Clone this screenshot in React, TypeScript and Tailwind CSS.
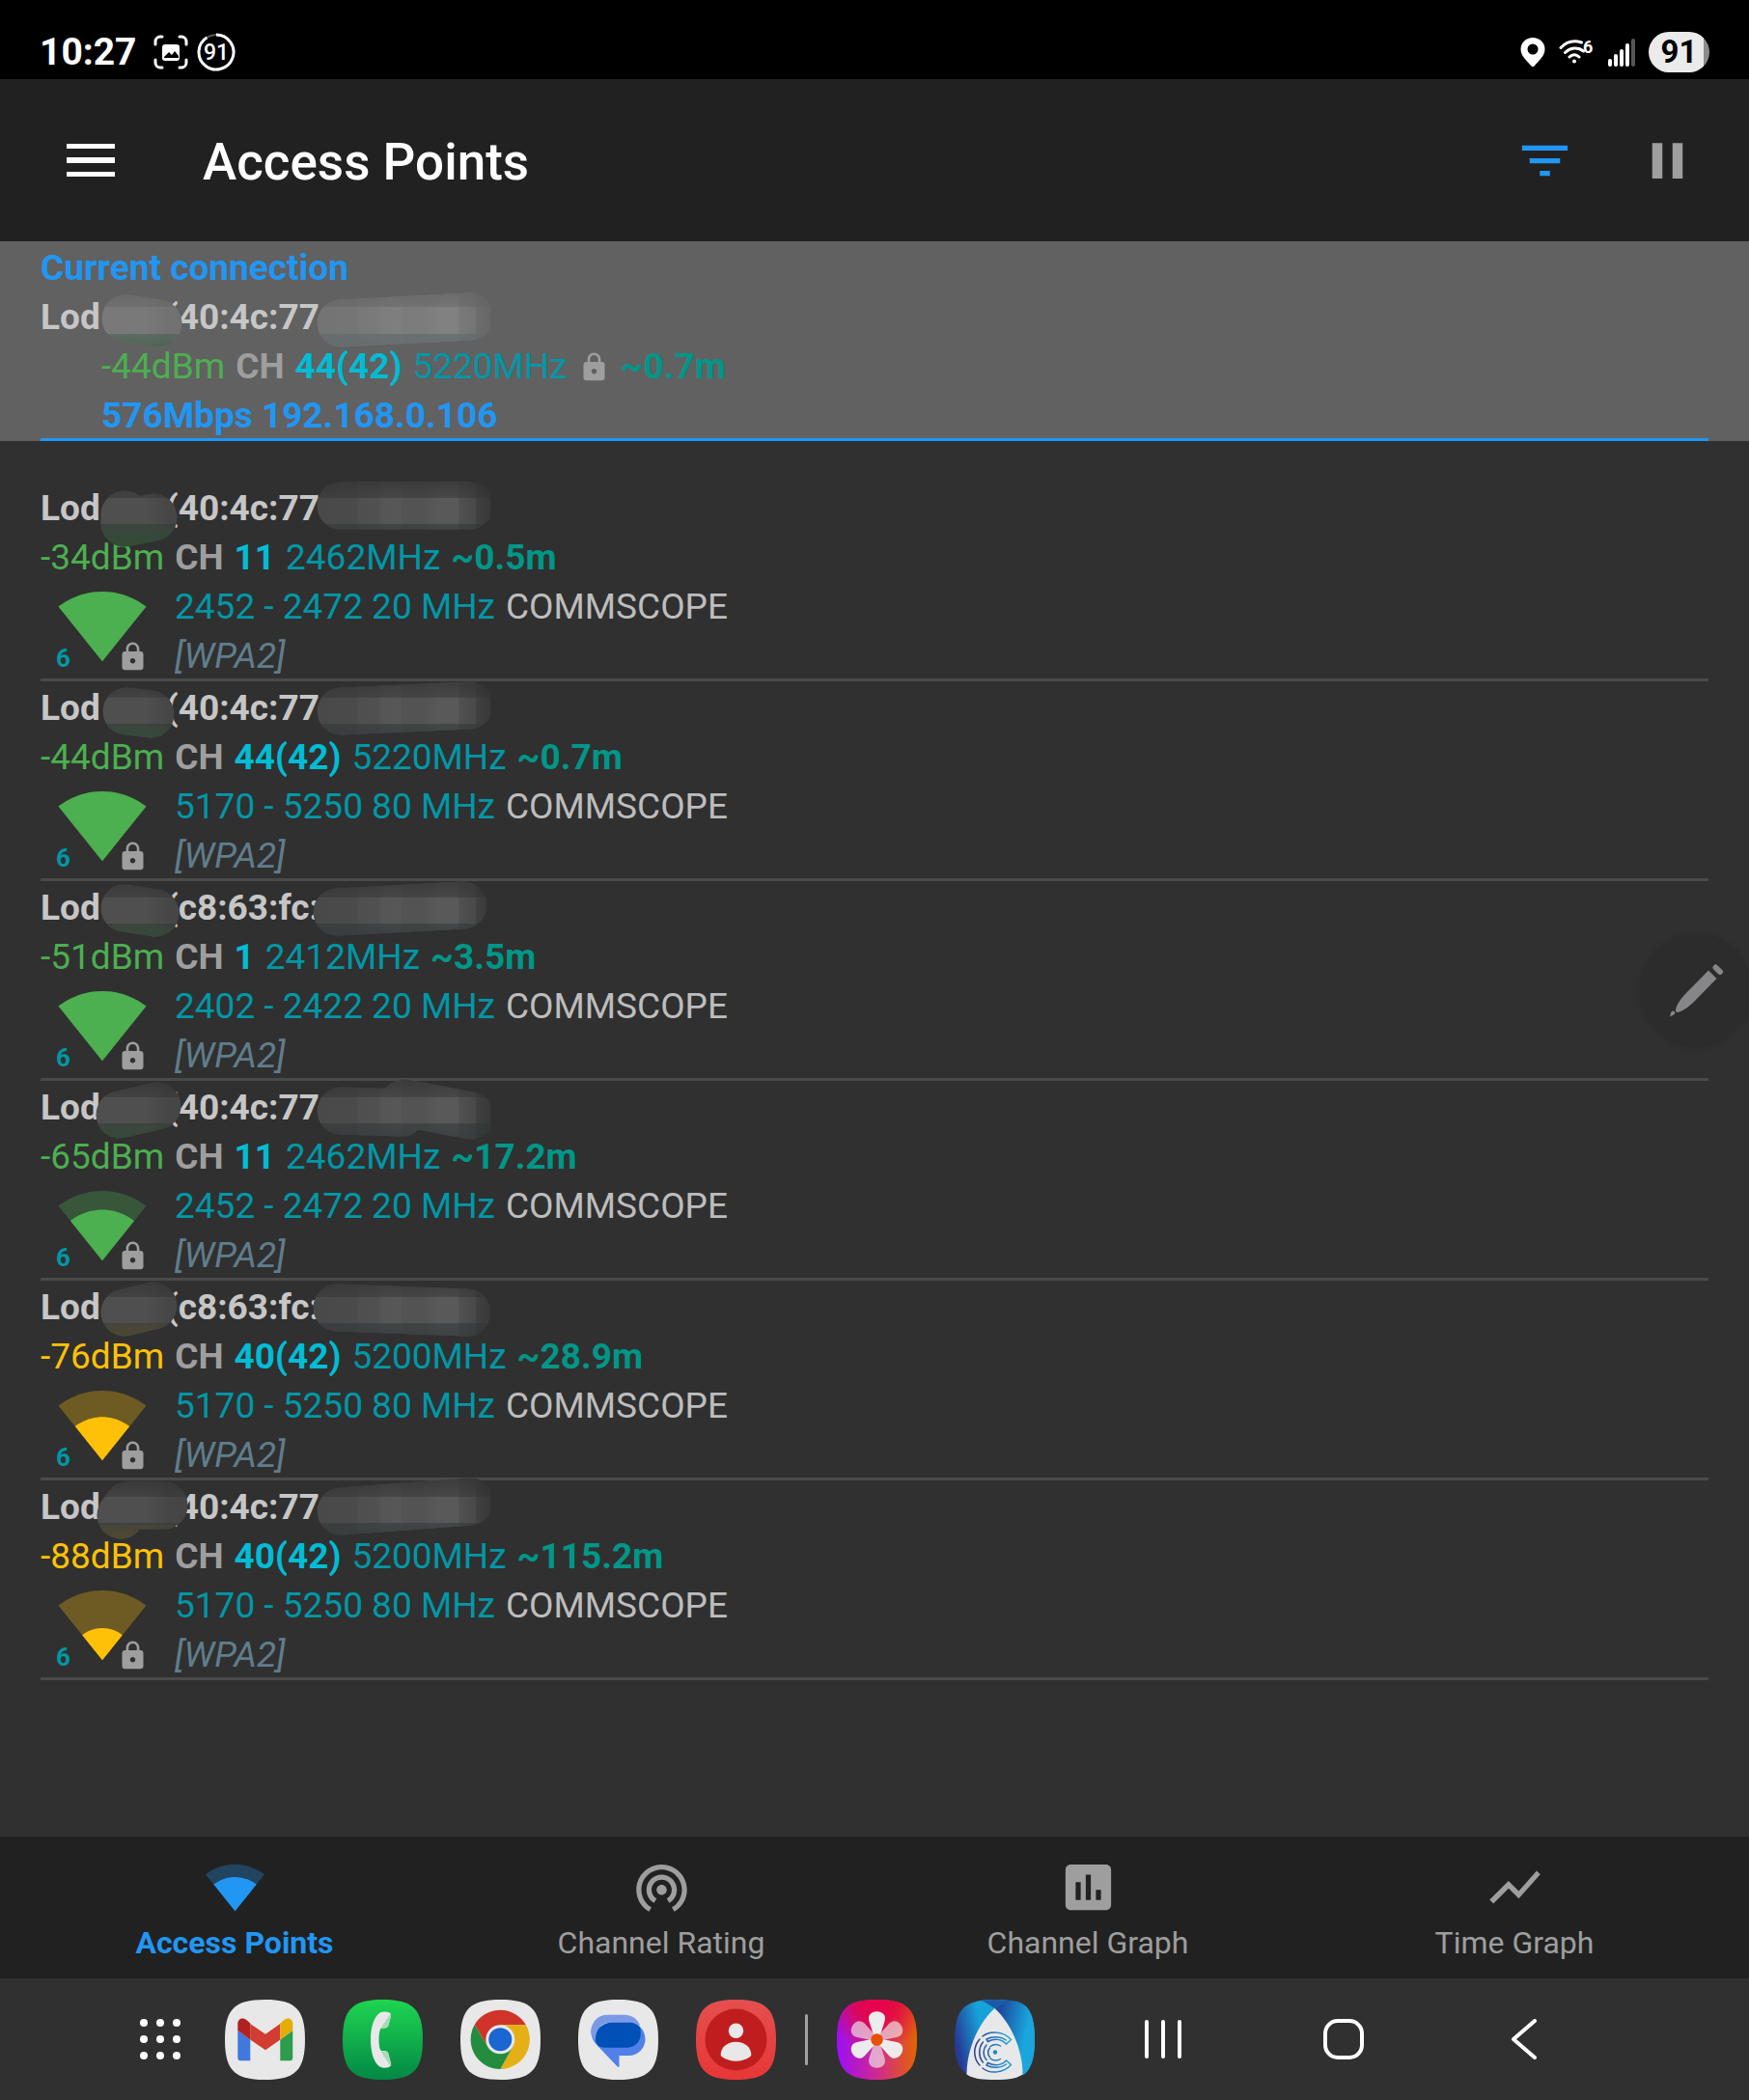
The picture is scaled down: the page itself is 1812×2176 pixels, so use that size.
import React from 'react';

type Level = 1 | 2 | 3 | 4;

interface AccessPoint {
    mac: string;
    signal: string;
    strong: boolean;
    level: Level;
    channel: string;
    frequency: string;
    distance: string;
    range: string;
    vendor: string;
    security: string;
    // strokes of the two marker swipes that hide the network name and the rest of the address
    nameSwipe: string;
    macSwipe: string;
}

const ACCESS_POINTS: AccessPoint[] = [
    {
        mac: '(40:4c:77', signal: '-34dBm', strong: true, level: 4, channel: '11', frequency: '2462MHz', distance: '~0.5m',
        range: '2452 - 2472 20 MHz', vendor: 'COMMSCOPE', security: '[WPA2]',
        nameSwipe: 'M87 34L87 43L117 37', macSwipe: 'M311 25H445',
    },
    {
        mac: '(40:4c:77', signal: '-44dBm', strong: true, level: 4, channel: '44(42)', frequency: '5220MHz', distance: '~0.7m',
        range: '5170 - 5250 80 MHz', vendor: 'COMMSCOPE', security: '[WPA2]',
        nameSwipe: 'M89 31L114 34', macSwipe: 'M311 31L445 25',
    },
    {
        mac: '(c8:63:fc:', signal: '-51dBm', strong: true, level: 4, channel: '1', frequency: '2412MHz', distance: '~3.5m',
        range: '2402 - 2422 20 MHz', vendor: 'COMMSCOPE', security: '[WPA2]',
        nameSwipe: 'M87 28L119 33', macSwipe: 'M307 32L438 25',
    },
    {
        mac: '(40:4c:77', signal: '-65dBm', strong: true, level: 3, channel: '11', frequency: '2462MHz', distance: '~17.2m',
        range: '2452 - 2472 20 MHz', vendor: 'COMMSCOPE', security: '[WPA2]',
        nameSwipe: 'M82 35L121 26', macSwipe: 'M311 31L374 33L377 23L446 36',
    },
    {
        mac: '(c8:63:fc:', signal: '-76dBm', strong: false, level: 2, channel: '40(42)', frequency: '5200MHz', distance: '~28.9m',
        range: '5170 - 5250 80 MHz', vendor: 'COMMSCOPE', security: '[WPA2]',
        nameSwipe: 'M87 33L117 26', macSwipe: 'M307 28L442 33',
    },
    {
        mac: '(40:4c:77', signal: '-88dBm', strong: false, level: 1, channel: '40(42)', frequency: '5200MHz', distance: '~115.2m',
        range: '5170 - 5250 80 MHz', vendor: 'COMMSCOPE', security: '[WPA2]',
        nameSwipe: 'M83 36L90 26L128 26', macSwipe: 'M311 32L445 22',
    },
];

const WEDGE_FULL = 'M12.01 21.49L23.64 7c-.45-.34-4.93-4-11.64-4C5.28 3 .81 6.66.36 7l11.63 14.49.01.01.01-.01z';

const WEDGES: Record<Level, string> = {
    1: 'M6.67 14.86L12 21.49v.01l.01-.01 5.33-6.63C17.06 14.65 15.03 13 12 13s-5.06 1.65-5.33 1.86z',
    2: 'M4.79 12.52l7.2 8.98H12l.01-.01 7.2-8.98C18.85 12.24 16.1 10 12 10s-6.85 2.24-7.21 2.52z',
    3: 'M3.53 10.95l8.46 10.54.01.01.01-.01 8.46-10.54C20.04 10.62 16.81 8 12 8c-4.81 0-8.04 2.62-8.47 2.95z',
    4: WEDGE_FULL,
};

const SQUIRCLE = 'M41.5 0C73 0 83 10 83 41.5S73 83 41.5 83 0 73 0 41.5 10 0 41.5 0z';

function SignalIcon({ level, className }: { level: Level; className: string }) {
    return (
        <svg viewBox="0 2 24 22" fill="currentColor" className={className} aria-hidden="true">
            <path fillOpacity=".3" d={WEDGE_FULL} />
            <path d={WEDGES[level]} />
        </svg>
    );
}

function LockIcon({ className }: { className: string }) {
    return (
        <svg viewBox="0 0 24 24" fill="currentColor" className={className} aria-hidden="true">
            <path d="M18 8h-1V6c0-2.76-2.24-5-5-5S7 3.24 7 6v2H6c-1.1 0-2 .9-2 2v10c0 1.1.9 2 2 2h12c1.1 0 2-.9 2-2V10c0-1.1-.9-2-2-2zm-6 9c-1.1 0-2-.9-2-2s.9-2 2-2 2 .9 2 2-.9 2-2 2zm3.1-9H8.9V6c0-1.71 1.39-3.1 3.1-3.1 1.71 0 3.1 1.39 3.1 3.1v2z" />
        </svg>
    );
}

// Gradients shared by every swipe and by the dock icons
function SharedDefs() {
    return (
        <svg className="absolute h-0 w-0" aria-hidden="true">
            <defs>
                <linearGradient id="swipe-name" gradientUnits="userSpaceOnUse" x1="60" y1="0" x2="150" y2="0">
                    <stop offset="0" stopColor="#fff" stopOpacity=".15" />
                    <stop offset=".55" stopColor="#fff" stopOpacity=".15" />
                    <stop offset=".8" stopColor="#fff" stopOpacity=".11" />
                    <stop offset="1" stopColor="#fff" stopOpacity=".1" />
                </linearGradient>
                <linearGradient id="swipe-mac" gradientUnits="userSpaceOnUse" x1="285" y1="0" x2="470" y2="0">
                    <stop offset="0" stopColor="#fff" stopOpacity=".12" />
                    <stop offset=".24" stopColor="#fff" stopOpacity=".13" />
                    <stop offset=".24" stopColor="#fff" stopOpacity=".15" />
                    <stop offset=".36" stopColor="#fff" stopOpacity=".16" />
                    <stop offset=".36" stopColor="#fff" stopOpacity=".18" />
                    <stop offset=".48" stopColor="#fff" stopOpacity=".19" />
                    <stop offset=".48" stopColor="#fff" stopOpacity=".17" />
                    <stop offset=".6" stopColor="#fff" stopOpacity=".17" />
                    <stop offset=".7" stopColor="#fff" stopOpacity=".2" />
                    <stop offset=".8" stopColor="#fff" stopOpacity=".2" />
                    <stop offset=".8" stopColor="#fff" stopOpacity=".16" />
                    <stop offset=".9" stopColor="#fff" stopOpacity=".12" />
                    <stop offset=".9" stopColor="#fff" stopOpacity=".08" />
                    <stop offset=".98" stopColor="#fff" stopOpacity=".04" />
                    <stop offset=".98" stopColor="#fff" stopOpacity="0" />
                </linearGradient>
                <linearGradient id="swipe-shade-dark" gradientUnits="userSpaceOnUse" x1="0" y1="0" x2="0" y2="64">
                    <stop offset="0" stopColor="#303030" stopOpacity=".7" />
                    <stop offset=".27" stopColor="#303030" stopOpacity=".4" />
                    <stop offset=".27" stopColor="#303030" stopOpacity="0" />
                    <stop offset=".68" stopColor="#303030" stopOpacity="0" />
                    <stop offset=".68" stopColor="#2f3536" stopOpacity=".5" />
                    <stop offset="1" stopColor="#2f3536" stopOpacity=".7" />
                </linearGradient>
                <linearGradient id="swipe-shade-light" gradientUnits="userSpaceOnUse" x1="0" y1="0" x2="0" y2="64">
                    <stop offset="0" stopColor="#616161" stopOpacity=".7" />
                    <stop offset=".27" stopColor="#616161" stopOpacity=".4" />
                    <stop offset=".27" stopColor="#616161" stopOpacity="0" />
                    <stop offset=".7" stopColor="#616161" stopOpacity="0" />
                    <stop offset=".7" stopColor="#5f696a" stopOpacity=".6" />
                    <stop offset="1" stopColor="#5f696a" stopOpacity=".8" />
                </linearGradient>
                <linearGradient id="swipe-tint-green" gradientUnits="userSpaceOnUse" x1="0" y1="0" x2="0" y2="70">
                    <stop offset=".65" stopColor="#2f5a30" stopOpacity="0" />
                    <stop offset=".65" stopColor="#2f5a30" stopOpacity=".2" />
                    <stop offset="1" stopColor="#2f5a30" stopOpacity=".6" />
                </linearGradient>
                <linearGradient id="swipe-tint-amber" gradientUnits="userSpaceOnUse" x1="0" y1="0" x2="0" y2="70">
                    <stop offset=".65" stopColor="#6a551c" stopOpacity="0" />
                    <stop offset=".65" stopColor="#6a551c" stopOpacity=".2" />
                    <stop offset="1" stopColor="#6a551c" stopOpacity=".6" />
                </linearGradient>
                <linearGradient id="phone-bg" x1="0" y1="0" x2="0" y2="1">
                    <stop offset="0" stopColor="#1ed551" />
                    <stop offset="1" stopColor="#038845" />
                </linearGradient>
                <linearGradient id="contacts-bg" x1="0" y1="0" x2="0" y2="1">
                    <stop offset="0" stopColor="#e54f4f" />
                    <stop offset="1" stopColor="#e83636" />
                </linearGradient>
                <linearGradient id="gallery-bg" x1="0" y1=".5" x2="1" y2=".5">
                    <stop offset="0" stopColor="#9b0ff5" />
                    <stop offset=".5" stopColor="#d02890" />
                    <stop offset="1" stopColor="#e36400" />
                </linearGradient>
                <radialGradient id="gallery-glow" cx=".5" cy="0" r=".65">
                    <stop offset="0" stopColor="#ea0050" />
                    <stop offset=".4" stopColor="#e6003c" stopOpacity=".8" />
                    <stop offset="1" stopColor="#e6003c" stopOpacity="0" />
                </radialGradient>
                <linearGradient id="sail-left" gradientUnits="userSpaceOnUse" x1="0" y1="36" x2="28" y2="30">
                    <stop offset="0" stopColor="#273a94" />
                    <stop offset="1" stopColor="#16a3da" />
                </linearGradient>
                <linearGradient id="sail-right" gradientUnits="userSpaceOnUse" x1="46" y1="20" x2="76" y2="26">
                    <stop offset="0" stopColor="#1c4c9f" />
                    <stop offset="1" stopColor="#1aa6dc" />
                </linearGradient>
                <linearGradient id="sail-mark" gradientUnits="userSpaceOnUse" x1="20" y1="54" x2="59" y2="54">
                    <stop offset="0" stopColor="#2b3990" />
                    <stop offset="1" stopColor="#1aa6dc" />
                </linearGradient>
            </defs>
        </svg>
    );
}

interface SwipesProps {
    name: string;
    mac: string;
    tint: 'green' | 'amber';
    light?: boolean;
}

function Swipes({ name, mac, tint, light = false }: SwipesProps) {
    const base = light ? '#616161' : '#303030';
    const shade = light ? 'url(#swipe-shade-light)' : 'url(#swipe-shade-dark)';
    const tintPaint = tint === 'green' ? 'url(#swipe-tint-green)' : 'url(#swipe-tint-amber)';
    return (
        <svg
            viewBox="0 0 500 70"
            fill="none"
            strokeWidth="49"
            strokeLinecap="round"
            strokeLinejoin="round"
            className="pointer-events-none absolute top-0 left-0 h-[70px] w-[500px] overflow-visible"
            aria-hidden="true"
        >
            {[base, 'url(#swipe-name)', shade, tintPaint].map(paint => <path key={paint} d={name} stroke={paint} />)}
            {[base, 'url(#swipe-mac)', shade].map(paint => <path key={paint} d={mac} stroke={paint} />)}
        </svg>
    );
}

function NetworkName({ mac }: { mac: string }) {
    return (
        <h3 className="font-bold text-[#c6c6c6]">
            Lod<span className="inline-block w-[68px]" />{mac}
        </h3>
    );
}

function StatusBar() {
    return (
        <div className="flex items-center justify-between bg-black px-[41px] pt-[33px] pb-[7px] text-white">
            <div className="flex items-center">
                <span className="text-[39px] leading-[42px] font-bold">10:27</span>
                <svg viewBox="0 0 36 36" className="ml-[17px] h-9 w-9" fill="none" stroke="#fff" strokeWidth="3" strokeLinecap="round" aria-hidden="true">
                    <path d="M2 10V7a5 5 0 0 1 5-5h2M27 2h2a5 5 0 0 1 5 5v3M34 26v3a5 5 0 0 1-5 5h-2M9 34H7a5 5 0 0 1-5-5v-3" />
                    <rect x="9" y="10" width="18" height="17" rx="3" fill="#fff" stroke="none" />
                    <path d="M11 23l5-5 3 3 3-4 4 5v2H11z" fill="#000" stroke="none" />
                </svg>
                <svg viewBox="0 0 40 40" className="ml-[9px] h-10 w-10" aria-hidden="true">
                    <path d="M20 2A18 18 0 1 1 10.500 4.700" fill="none" stroke="#fff" strokeWidth="3" />
                    <path d="M10.500 4.700A18 18 0 0 1 20 2" fill="none" stroke="#555" strokeWidth="2" />
                    <text x="20" y="28" textAnchor="middle" fill="#fff" className="text-[23px] font-medium">91</text>
                </svg>
            </div>
            <div className="flex items-center">
                <svg viewBox="0 0 26 32" className="h-8 w-[26px]" fill="#fff" aria-hidden="true">
                    <path fillRule="evenodd" d="M13 1C6 1 .5 6.300.5 13c0 7 6.500 12 10.500 17 1.200 1.500 2.800 1.500 4 0C19 25 25.500 20 25.500 13 25.500 6.300 20 1 13 1zm0 6.500a5.500 5.500 0 1 1 0 11 5.500 5.500 0 0 1 0-11z" />
                </svg>
                <svg viewBox="0 0 40 36" className="ml-[14px] h-9 w-10" fill="none" stroke="#fff" strokeWidth="3" strokeLinecap="round" aria-hidden="true">
                    <path d="M2 13.500C8 7 16 5.500 23.500 8M6.500 18.500c5-5 13-6.500 19-1.500M11 23c3-3 7-3 10 0" />
                    <circle cx="16" cy="27.500" r="2" fill="#fff" stroke="none" />
                    <text x="25" y="19" fill="#fff" stroke="none" className="text-[18px] leading-[18px] font-bold">6</text>
                </svg>
                <svg viewBox="0 0 28 30" className="ml-[11px] h-[30px] w-7" fill="#fff" aria-hidden="true">
                    <rect x="0" y="22" width="4" height="8" rx="2" />
                    <rect x="6" y="17" width="4" height="13" rx="2" />
                    <rect x="12" y="12" width="4" height="18" rx="2" />
                    <rect x="18" y="6" width="4" height="24" rx="2" />
                    <rect x="24" y="1" width="4" height="29" rx="2" fill="#555" />
                </svg>
                <span className="ml-[14px] flex h-[42px] w-[63px] items-center justify-center rounded-full bg-linear-to-r from-[#ebebeb] from-90% to-[#8c8c8c] to-90% text-[33px] leading-[42px] font-bold text-black">91</span>
            </div>
        </div>
    );
}

function Toolbar() {
    return (
        <header className="flex h-[168px] items-center bg-[#212121] pr-[53px] pl-[69px]">
            <button type="button" aria-label="Open menu" className="text-white">
                <svg viewBox="0 0 50 34" fill="currentColor" className="h-[34px] w-[50px]">
                    <path d="M0 0h50v5H0zM0 14h50v6H0zM0 29h50v5H0z" />
                </svg>
            </button>
            <h1 className="ml-[91px] pt-1 text-[53px] leading-[62px] font-medium text-white">Access Points</h1>
            <button type="button" aria-label="Filter" className="ml-auto text-[#2196f3]">
                <svg viewBox="0 0 24 24" fill="currentColor" className="h-[63px] w-[63px]">
                    <path d="M10 18h4v-2h-4v2zM3 6v2h18V6H3zm3 7h12v-2H6v2z" />
                </svg>
            </button>
            <button type="button" aria-label="Pause scanning" className="ml-[64px] text-[#9e9e9e]">
                <svg viewBox="0 0 24 24" fill="currentColor" className="h-[63px] w-[63px]">
                    <path d="M6 19h4V5H6v14zm8-14v14h4V5h-4z" />
                </svg>
            </button>
        </header>
    );
}

function CurrentConnection() {
    return (
        <section className="bg-[#616161] px-[42px]">
            <div className="relative flex flex-col gap-[7px] border-b-3 border-[#2196f3] pt-[6px] pb-px">
                <h2 className="font-bold text-[#2196f3]">Current connection</h2>
                <NetworkName mac="(40:4c:77" />
                <p className="flex items-center gap-[11px] pl-[63px]">
                    <span className="text-[#4caf50]">-44dBm</span>
                    <span className="font-bold text-[#9e9e9e]">CH</span>
                    <span className="font-bold text-[#00bcd4]">44(42)</span>
                    <span className="text-[#0097a7]">5220MHz</span>
                    <LockIcon className="h-[33px] w-[33px] text-[#9e9e9e]" />
                    <span className="font-bold text-[#009688]">~0.7m</span>
                </p>
                <p className="pl-[63px] font-bold text-[#2196f3]">576Mbps 192.168.0.106</p>
                <div className="absolute top-[51px] left-0">
                    <Swipes light tint="green" name="M88 29L122 34" mac="M311 34L445 27" />
                </div>
            </div>
        </section>
    );
}

function AccessPointRow({ ap }: { ap: AccessPoint }) {
    const signalColor = ap.strong ? 'text-[#4caf50]' : 'text-[#ffc107]';
    return (
        <li className="relative flex flex-col gap-[7px] border-b-3 border-[#4a4a4a] pt-[6px] pb-px">
            <NetworkName mac={ap.mac} />
            <p className="flex gap-[11px]">
                <span className={signalColor}>{ap.signal}</span>
                <span className="font-bold text-[#9e9e9e]">CH</span>
                <span className="font-bold text-[#00bcd4]">{ap.channel}</span>
                <span className="text-[#0097a7]">{ap.frequency}</span>
                <span className="font-bold text-[#009688]">{ap.distance}</span>
            </p>
            <div className="flex items-start">
                <div className="relative h-[90px] w-[139px] pt-[2px] pl-[17px]">
                    <SignalIcon level={ap.level} className={`h-[86px] w-[94px] ${signalColor}`} />
                    <span className="absolute bottom-0 left-4 text-[26px] leading-[30px] font-bold text-[#0097a7]">6</span>
                    <LockIcon className="absolute bottom-0 left-[79px] h-[33px] w-[33px] text-[#9e9e9e]" />
                </div>
                <div className="flex flex-col gap-[7px]">
                    <p className="flex gap-[11px]">
                        <span className="text-[#0097a7]">{ap.range}</span>
                        <span className="text-[#bdbdbd]">{ap.vendor}</span>
                    </p>
                    <p className="text-[#607d8b] italic">{ap.security}</p>
                </div>
            </div>
            <Swipes tint={ap.strong ? 'green' : 'amber'} name={ap.nameSwipe} mac={ap.macSwipe} />
        </li>
    );
}

function EditBubble() {
    return (
        <button type="button" aria-label="Edit" className="absolute top-[967px] -right-[3px] h-[116px] w-[116px] rounded-full bg-[#2c2c2c] shadow-[0_2px_6px_rgba(0,0,0,0.12)]">
            <svg viewBox="0 0 116 116" fill="#868688" className="h-full w-full">
                <path d="M31 86.500l1-4c.5-1.500 2.500-2.500 3.500-1.500s1 2.500-.5 3.500z" />
                <path d="M71 38.500l8.500 8.500-23 23.500c-6 6-12 10-17 11.500-1.500.5-3-1-2.500-2.500C38 74 42 68 48 62z" />
                <path d="M78.500 35.500l4.500 4.500" stroke="#868688" strokeWidth="6" strokeLinecap="round" />
            </svg>
        </button>
    );
}

const TABS = [
    { label: 'Channel Rating', d: 'M12 11c-1.1 0-2 .9-2 2s.9 2 2 2 2-.9 2-2-.9-2-2-2zm6 2c0-3.31-2.69-6-6-6s-6 2.69-6 6c0 2.22 1.21 4.15 3 5.19l1-1.74c-1.19-.7-2-1.97-2-3.45 0-2.21 1.79-4 4-4s4 1.790 4 4c0 1.480-.81 2.750-2 3.450l1 1.740c1.790-1.040 3-2.970 3-5.190zM12 3C6.480 3 2 7.480 2 13c0 3.700 2.010 6.920 4.990 8.650l1-1.730C5.610 18.530 4 15.960 4 13c0-4.420 3.580-8 8-8s8 3.580 8 8c0 2.960-1.610 5.530-4 6.920l1 1.730c2.990-1.730 5-4.950 5-8.650 0-5.520-4.480-10-10-10z' },
    { label: 'Channel Graph', d: 'M19 3H5c-1.1 0-2 .9-2 2v14c0 1.1.9 2 2 2h14c1.1 0 2-.9 2-2V5c0-1.1-.9-2-2-2zM9 17H7v-7h2v7zm4 0h-2V7h2v10zm4 0h-2v-4h2v4z' },
    { label: 'Time Graph', d: 'M3.5 18.490l6-6.010 4 4L22 6.920l-1.410-1.410-7.090 7.970-4-4L2 16.990z' },
];

function BottomTabs() {
    return (
        <nav className="flex h-[147px] bg-[#212121] px-[22px] text-[32px] leading-[38px]">
            <button type="button" aria-current="page" className="flex flex-1 flex-col items-center gap-[7px] pt-[26px] font-bold text-[#2196f3]">
                <SignalIcon level={3} className="h-[58px] w-[63px]" />
                Access Points
            </button>
            {TABS.map(tab => (
                <button key={tab.label} type="button" className="flex flex-1 flex-col items-center gap-[7px] pt-[21px] text-[#9e9e9e]">
                    <svg viewBox="0 0 24 24" fill="currentColor" className="h-[63px] w-[63px]" aria-hidden="true">
                        <path d={tab.d} />
                    </svg>
                    {tab.label}
                </button>
            ))}
        </nav>
    );
}

function DockIcon({ label, fill, children }: { label: string; fill: string; children: React.ReactNode }) {
    return (
        <button type="button" aria-label={label}>
            <svg viewBox="0 0 83 83" className="h-[83px] w-[83px]">
                <path d={SQUIRCLE} fill={fill} />
                {children}
            </svg>
        </button>
    );
}

function Dock() {
    return (
        <div className="flex h-[126px] items-center justify-between bg-[#303030] pr-[140px] pl-[144px]">
            <div className="flex items-center">
                <button type="button" aria-label="All apps" className="mr-[45px]">
                    <svg viewBox="0 0 44 44" fill="#fff" className="h-11 w-11">
                        {[5, 22, 39].map(y => [5, 22, 39].map(x => <circle key={`${x}-${y}`} cx={x} cy={y} r="4" />))}
                    </svg>
                </button>
                <div className="flex items-center gap-[39px]">
                    <DockIcon label="Gmail" fill="#e8e8e8">
                        <path d="M13.300 32l13 9.500v21.800h-10a3 3 0 0 1-3-3z" fill="#4078dc" />
                        <path d="M70.300 32l-13 9.500v21.800h10a3 3 0 0 0 3-3z" fill="#2f9b4c" />
                        <path d="M26.300 25L42 35.800l15.300-10.800V41.500L42 52.300 26.300 41.500z" fill="#d33c30" />
                        <path d="M13.300 25c0-5 5-7 9-4l4 3.500v17l-13-9.500z" fill="#b02220" />
                        <path d="M70.300 25c0-5-5-7-9-4l-4 3.500v17l13-9.500z" fill="#e6ac08" />
                    </DockIcon>
                    <DockIcon label="Phone" fill="url(#phone-bg)">
                        <path d="M43 12.500l4 .5c2.500.7 3.500 1.800 3 4l-2.500 9.500c-.6 2-2 3-4 3h-3c-2 0-3 6-3 12s1 11.500 3 11.500h3c2 0 3.400 1 4 3L50 66c.5 2.200-.5 3.500-3 4.200l-4 .5c-9 0-14-14-14-29.200s5-29 14-29z" fill="#e8e8e8" />
                        <path d="M49.500 14.500c.7.700.8 1.500.5 2.500l-2.500 9.500c-.6 2-2 3-4 3h-4zM49.500 69c.7-.7.8-2 .5-3l-2.500-9.500c-.6-2-2-3-4-3h-4z" fill="#a9d9b8" />
                    </DockIcon>
                    <DockIcon label="Chrome" fill="#e8e8e8">
                        <path d="M14.700 26A30.700 30.700 0 0 1 67.900 26.300H41.300v15L28.300 48.800z" fill="#d03428" />
                        <path d="M67.900 26.300A30.700 30.700 0 0 1 41.300 72L54.300 48.800 41.300 41.300v-15z" fill="#e5b015" />
                        <path d="M41.300 72A30.700 30.700 0 0 1 14.700 26L28.300 48.800l13-7.500 13 7.500z" fill="#248c3e" />
                        <circle cx="41.300" cy="41.300" r="15" fill="#e8e8e8" />
                        <circle cx="41.300" cy="41.300" r="12" fill="#1a66d2" />
                    </DockIcon>
                    <DockIcon label="Messages" fill="#e8e8e8">
                        <path d="M13.300 32c0 6 2 11 6 15l21.500 22.500c.8.900 1.700.5 1.700-.7V58h10a17 17 0 0 0 17-17c0-10-7-17.300-17-17.300H34z" fill="#5080e8" />
                        <path d="M13.300 33a17 17 0 0 1 17-17.300h17.400c9 0 14 5 16.500 11L30 24c-8 2-11.500 8-12 18-3-2-4.700-5.500-4.700-9z" fill="#7b9ae6" />
                        <path d="M35 23.700h18c5 0 8 1.500 11 5 3 12-3 21-14 21H27c-6 0-9-4-9-9 0-10 7-17 17-17z" fill="#0050b8" />
                    </DockIcon>
                    <DockIcon label="Contacts" fill="url(#contacts-bg)">
                        <circle cx="41.500" cy="41.500" r="32" fill="#c01d1f" />
                        <circle cx="41.500" cy="32.300" r="7.700" fill="#e8e8e8" />
                        <path d="M41.500 43.700c9 0 15.500 5.500 15.800 13 0 1.300-.4 1.800-1.400 2.600-8 5.900-20.800 5.900-28.800 0-1-.8-1.400-1.300-1.400-2.600.3-7.500 6.800-13 15.800-13z" fill="#e8e8e8" />
                    </DockIcon>
                </div>
                <span className="mx-[30px] h-[53px] w-[3px] rounded-full bg-[#a0a0a0]" />
                <div className="flex items-center gap-[39px]">
                    <DockIcon label="Gallery" fill="url(#gallery-bg)">
                        <path d={SQUIRCLE} fill="url(#gallery-glow)" />
                        {[0, 60, 120, 180, 240, 300].map(angle => (
                            <path
                                key={angle}
                                d="M38.500 38L33.500 22.500C31.500 16 36 12.300 41.500 12.300s10 3.700 8 10.200L44.500 38z"
                                transform={`rotate(${angle} 41.500 41.500)`}
                                fill="#ececec"
                                fillOpacity={angle % 120 === 0 ? 1 : 0.65}
                            />
                        ))}
                        <circle cx="41.500" cy="41.500" r="6.300" fill="#e65008" />
                    </DockIcon>
                    <DockIcon label="Wi-Fi tools" fill="url(#sail-left)">
                        <path d="M54 .5C74.500 1 83 10.500 83 41.500c0 20-4 32-12.500 37L41.500 9z" fill="url(#sail-right)" />
                        <path d="M28 .7Q41 -.7 54 .7L41.500 9z" fill="#1c5aa8" />
                        <path d="M41.500 9C26 23 12.500 50 12.500 77.500 19 82 28 83 41.500 83s22.500-1 29-5.500C70.500 50 57 23 41.500 9z" fill="#e8e8e8" />
                        <g fill="none" stroke="url(#sail-mark)" strokeWidth="1.500" strokeLinecap="round" strokeLinejoin="round">
                            <path d="M29 38c8-6.500 22-5 29.500 3.500L53.500 46c-5-5.500-12.500-6-19-2.500" />
                            <path d="M34.500 43.500l-1.500-2.500c7-3.500 15-3 20.500 1" />
                            <path d="M29 71c8 6.500 22 5 29.500-3.500L53.500 63c-5 5.500-12.500 6-19 2.500" />
                            <path d="M34.500 65.500l-1.500 2.500c7 3.500 15 3 20.500-1" />
                            <path d="M26 41c-7 7.500-7 19.500 0 27M29.500 44c-5 5.500-5 15.500 0 21M33 47c-4 4.500-4 11 0 15.500M36.500 50c-2.500 2.500-2.500 7 0 9.500" />
                            <path d="M37 48.500c3.500-2.500 7.500-2.500 10.500-.5M37 61c3.500 2.500 7.500 2.500 10.500.5" />
                        </g>
                        <circle cx="42" cy="54.500" r="2.200" fill="#1f86c6" />
                    </DockIcon>
                </div>
            </div>
            <div className="flex items-center">
                <button type="button" aria-label="Recent apps" className="flex w-[187px] justify-center">
                    <svg viewBox="0 0 42 42" className="h-[42px] w-[42px]" stroke="#fff" strokeWidth="4" strokeLinecap="round">
                        <path d="M4 3v36M21 3v36M38 3v36" />
                    </svg>
                </button>
                <button type="button" aria-label="Home" className="flex w-[187px] justify-center">
                    <svg viewBox="0 0 42 42" className="h-[42px] w-[42px]" fill="none" stroke="#fff" strokeWidth="4">
                        <rect x="2" y="2" width="38" height="38" rx="13" />
                    </svg>
                </button>
                <button type="button" aria-label="Back" className="flex w-[187px] justify-center">
                    <svg viewBox="0 0 42 42" className="h-[42px] w-[42px]" fill="none" stroke="#fff" strokeWidth="4" strokeLinecap="round" strokeLinejoin="round">
                        <path d="M32 2L10 21l22 19" />
                    </svg>
                </button>
            </div>
        </div>
    );
}

export default function App() {
    return (
        <div className="relative flex min-h-screen flex-col overflow-hidden bg-[#303030] font-['Roboto','Liberation_Sans',sans-serif] text-[37px] leading-[44px]">
            <SharedDefs />
            <StatusBar />
            <Toolbar />
            <main className="flex-1">
                <CurrentConnection />
                <ul className="mx-[42px] mt-[42px]">
                    {ACCESS_POINTS.map(ap => <AccessPointRow key={ap.signal} ap={ap} />)}
                </ul>
            </main>
            <BottomTabs />
            <Dock />
            <EditBubble />
        </div>
    );
}
